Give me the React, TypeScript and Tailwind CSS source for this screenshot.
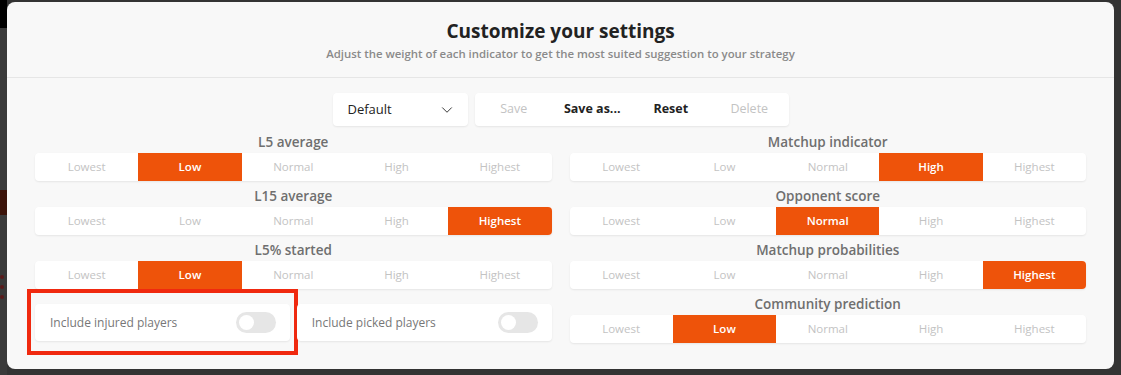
import { ChevronDown } from "lucide-react"

const levels = ["Lowest", "Low", "Normal", "High", "Highest"]

interface Weight {
    label: string
    value: number
}

const leftWeights: Weight[] = [
    { label: "L5 average", value: 1 },
    { label: "L15 average", value: 4 },
    { label: "L5% started", value: 1 },
]

const rightWeights: Weight[] = [
    { label: "Matchup indicator", value: 3 },
    { label: "Opponent score", value: 2 },
    { label: "Matchup probabilities", value: 4 },
    { label: "Community prediction", value: 1 },
]

function WeightPicker({ label, value }: Weight) {
    return (
        <div className="flex flex-col">
            <div className="h-[22px] text-center text-[13.5px] leading-[22px] font-semibold text-[#6f6f6f]">
                {label}
            </div>
            <div className="grid h-[28px] grid-cols-5 overflow-hidden rounded-[4px] bg-white shadow-[0_1px_2px_rgba(0,0,0,0.08)]">
                {levels.map((level, i) => (
                    <div
                        key={level}
                        className={`flex items-center justify-center text-[11.5px] ${i === value
                                ? "bg-[#ee530a] font-semibold text-white"
                                : "font-medium text-[#c3c3c3]"
                            }`}
                    >
                        {level}
                    </div>
                ))}
            </div>
        </div>
    )
}

function Toggle() {
    return (
        <div className="flex h-[21px] w-[40px] items-center rounded-full bg-[#e6e6e6] px-[3px]">
            <div className="h-[15px] w-[15px] rounded-full bg-white" />
        </div>
    )
}

function ToggleCard({ label, marked }: { label: string; marked?: boolean }) {
    return (
        <div className="relative flex h-[37px] items-center justify-between rounded-[4px] bg-white pl-[15px] pr-[14px] shadow-[0_1px_2px_rgba(0,0,0,0.08)]">
            <span className="text-[12px] text-[#777]">{label}</span>
            <Toggle />
            {/* Annotation box */}
            {marked && (
                <div className="pointer-events-none absolute -top-[15px] -bottom-[14px] -left-[8px] -right-[8px] border-[4px] border-[#f0290f]" />
            )}
        </div>
    )
}

export default function App() {
    return (
        <div
            className="flex h-[375px] w-[1121px] overflow-hidden bg-[#333]"
            style={{ fontFamily: "'Open Sans', 'Liberation Sans', sans-serif" }}
        >
            {/* Page behind the modal, left edge */}
            <div className="flex w-[7px] flex-col">
                <div className="h-[28px] bg-black" />
                <div className="h-[162px] bg-[#3a3a3a]" />
                <div className="h-[25px] bg-[#3a1208]" />
                <div className="h-[60px] bg-[#3a3a3a]" />
                <div className="flex flex-1 flex-col gap-[6px] bg-[#3a3a3a]">
                    <div className="h-[4px] w-[4px] rounded-full bg-[#5a1a1a]" />
                    <div className="h-[4px] w-[4px] rounded-full bg-[#5a1a1a]" />
                    <div className="h-[4px] w-[4px] rounded-full bg-[#5a1a1a]" />
                </div>
            </div>

            <div className="pt-[2px]">
                <div className="flex h-[367px] w-[1107px] flex-col rounded-[8px] bg-[#f8f8f8]">
                    {/* Header */}
                    <div className="flex h-[76px] flex-col items-center border-b border-[#e6e6e6] pt-[16px]">
                        <h1 className="text-[19px] leading-[27px] font-bold text-[#222]">
                            Customize your settings
                        </h1>
                        <p className="mt-[1px] text-[11.4px] leading-[16px] font-semibold text-[#8a8a8a]">
                            Adjust the weight of each indicator to get the most suited suggestion to your strategy
                        </p>
                    </div>

                    {/* Preset controls */}
                    <div className="flex justify-center gap-[7px] pt-[15px]">
                        <div className="flex h-[33px] w-[135px] items-center justify-between rounded-[4px] bg-white pl-[15px] pr-[12px] shadow-[0_1px_2px_rgba(0,0,0,0.08)]">
                            <span className="text-[13px] text-[#222]">Default</span>
                            <ChevronDown className="h-[18px] w-[18px] text-[#333]" strokeWidth={1.3} />
                        </div>
                        <div className="grid h-[33px] w-[314px] grid-cols-4 rounded-[4px] bg-white shadow-[0_1px_2px_rgba(0,0,0,0.08)]">
                            <button className="text-[12.5px] font-medium text-[#c3c3c3]">Save</button>
                            <button className="text-[12.5px] font-bold text-[#222]">Save as...</button>
                            <button className="text-[12.5px] font-bold text-[#222]">Reset</button>
                            <button className="text-[12.5px] font-medium text-[#c3c3c3]">Delete</button>
                        </div>
                    </div>

                    {/* Weights */}
                    <div className="grid grid-cols-2 gap-x-[18px] px-[28px] pt-[5px]">
                        <div className="flex flex-col">
                            <div className="flex flex-col gap-[4px]">
                                {leftWeights.map((w) => (
                                    <WeightPicker key={w.label} {...w} />
                                ))}
                            </div>
                            <div className="mt-[15px] grid grid-cols-2 gap-[7px]">
                                <ToggleCard label="Include injured players" marked />
                                <ToggleCard label="Include picked players" />
                            </div>
                        </div>
                        <div className="flex flex-col gap-[4px]">
                            {rightWeights.map((w) => (
                                <WeightPicker key={w.label} {...w} />
                            ))}
                        </div>
                    </div>
                </div>
            </div>

            <div className="flex-1 bg-[#333]" />
        </div>
    )
}
